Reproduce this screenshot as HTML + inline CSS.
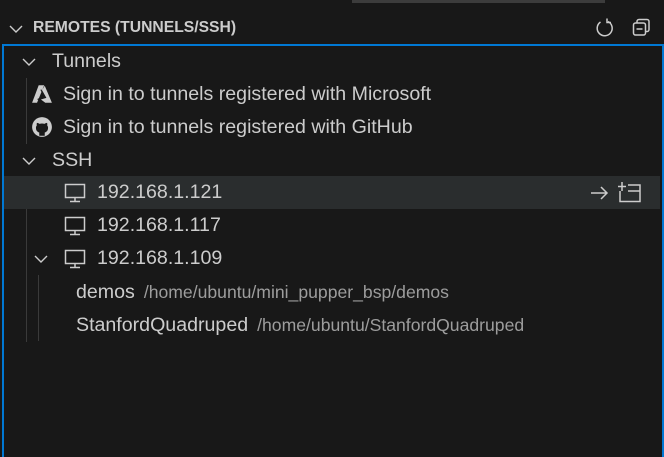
<!DOCTYPE html>
<html><head><style>
body{margin:0;width:664px;height:455px;background:#181818;position:relative;overflow:hidden;font-family:"Liberation Sans",sans-serif;color:#cccccc}
.topbar{position:absolute;left:352px;top:0;width:253px;height:3px;background:#3c3c3c}
.hdr{position:absolute;left:0;top:14px;width:664px;height:30px}
.hdr .t{position:absolute;left:33px;top:5px;font-size:15.7px;font-weight:bold;color:#cccccc}
.frame{position:absolute;left:2px;top:44px;width:658px;height:411px;border:2px solid #0078d4;border-bottom:none}
.row{position:absolute;left:4px;width:656px;height:33px;font-size:19.6px;line-height:33px;white-space:nowrap}
.row span.d{color:#9d9d9d;font-size:17.6px;margin-left:9px}
.hl{background:#2a2d2e}
svg{position:absolute}
.guide{position:absolute;width:1px;background:#3a3a3a}
</style></head><body>
<div class="topbar"></div>
<div class="hdr">
<svg style="left:8px;top:7px" width="16" height="16" viewBox="0 0 16 16"><path d="M2 5l6 6 6-6" fill="none" stroke="#ccc" stroke-width="1.4"/></svg>
<div class="t">REMOTES (TUNNELS/SSH)</div>
<svg style="left:594px;top:3px" width="22" height="22" viewBox="0 0 22 22"><path d="M14 4.5A7.5 7.5 0 1 1 6.5 5" fill="none" stroke="#ccc" stroke-width="1.5"/><path d="M13 1.5v4h4" fill="none" stroke="#ccc" stroke-width="1.5"/></svg>
<svg style="left:631px;top:3px" width="22" height="22" viewBox="0 0 22 22"><rect x="6" y="2.5" width="12" height="12" rx="2" fill="none" stroke="#ccc" stroke-width="1.5"/><rect x="2.5" y="6" width="12" height="12" rx="2" fill="#181818" stroke="#ccc" stroke-width="1.5"/><path d="M5.5 12h6" stroke="#ccc" stroke-width="1.5"/></svg>
</div>
<div class="frame"></div>
<div class="guide" style="left:26px;top:78px;height:66px"></div>
<div class="guide" style="left:26px;top:176px;height:166px"></div>
<div class="guide" style="left:38px;top:275px;height:66px"></div>
<div class="row" style="top:45px"><svg style="left:17px;top:9px" width="16" height="16" viewBox="0 0 16 16"><path d="M2 5l6 6 6-6" fill="none" stroke="#ccc" stroke-width="1.4"/></svg><span style="position:absolute;left:48px">Tunnels</span></div>
<div class="row" style="top:78px"><svg style="left:27px;top:5px" width="22" height="22" viewBox="0 0 20 20"><path d="M7 2h5l-6.5 16H1z" fill="#ccc"/><path d="M12.5 2.5L19 18h-6l-4-3 5-1.5-4-7z" fill="#ccc"/><path d="M9 6l3 6-6 3" fill="none" stroke="#181818" stroke-width="1"/></svg><span style="position:absolute;left:59px">Sign in to tunnels registered with Microsoft</span></div>
<div class="row" style="top:111px"><svg style="left:27px;top:5px" width="22" height="22" viewBox="0 0 20 20"><circle cx="10" cy="10" r="9" fill="#ccc"/><path d="M7.5 18v-3c-1-.3-3-1.2-3-4.2 0-1 .3-1.7.8-2.3-.2-.6-.2-1.4.1-2.2 1 0 1.8.5 2.3.9a7 7 0 0 1 4.6 0c.5-.4 1.3-.9 2.3-.9.3.8.3 1.6.1 2.2.5.6.8 1.3.8 2.3 0 3-2 3.9-3 4.2v3z" fill="#181818"/></svg><span style="position:absolute;left:59px">Sign in to tunnels registered with GitHub</span></div>
<div class="row" style="top:144px"><svg style="left:17px;top:9px" width="16" height="16" viewBox="0 0 16 16"><path d="M2 5l6 6 6-6" fill="none" stroke="#ccc" stroke-width="1.4"/></svg><span style="position:absolute;left:48px">SSH</span></div>
<div class="row hl" style="top:176px;height:33px"><svg style="left:60px;top:7px" width="22" height="20" viewBox="0 0 22 20"><rect x="1.5" y="1.5" width="19" height="13" fill="none" stroke="#ccc" stroke-width="1.5"/><path d="M11 15v3M6 18.5h10" stroke="#ccc" stroke-width="1.5"/></svg><span style="position:absolute;left:93px">192.168.1.121</span>
<svg style="left:586px;top:9px" width="20" height="16" viewBox="0 0 20 16"><path d="M1 8h16M11 2l6 6-6 6" fill="none" stroke="#ccc" stroke-width="1.5"/></svg>
<svg style="left:614px;top:5px" width="24" height="22" viewBox="0 0 24 22"><path d="M4 1v9M0 5.5h8" stroke="#ccc" stroke-width="1.5"/><path d="M2 10v10.5h20V4H10" fill="none" stroke="#ccc" stroke-width="1.5"/><path d="M10 10h12" stroke="#ccc" stroke-width="1.5"/></svg></div>
<div class="row" style="top:209px"><svg style="left:60px;top:7px" width="22" height="20" viewBox="0 0 22 20"><rect x="1.5" y="1.5" width="19" height="13" fill="none" stroke="#ccc" stroke-width="1.5"/><path d="M11 15v3M6 18.5h10" stroke="#ccc" stroke-width="1.5"/></svg><span style="position:absolute;left:93px">192.168.1.117</span></div>
<div class="row" style="top:242px"><svg style="left:29px;top:9px" width="16" height="16" viewBox="0 0 16 16"><path d="M2 5l6 6 6-6" fill="none" stroke="#ccc" stroke-width="1.4"/></svg><svg style="left:60px;top:7px" width="22" height="20" viewBox="0 0 22 20"><rect x="1.5" y="1.5" width="19" height="13" fill="none" stroke="#ccc" stroke-width="1.5"/><path d="M11 15v3M6 18.5h10" stroke="#ccc" stroke-width="1.5"/></svg><span style="position:absolute;left:93px">192.168.1.109</span></div>
<div class="row" style="top:276px"><span style="position:absolute;left:72px">demos<span class="d">/home/ubuntu/mini_pupper_bsp/demos</span></span></div>
<div class="row" style="top:309px"><span style="position:absolute;left:72px">StanfordQuadruped<span class="d">/home/ubuntu/StanfordQuadruped</span></span></div>
</body></html>
